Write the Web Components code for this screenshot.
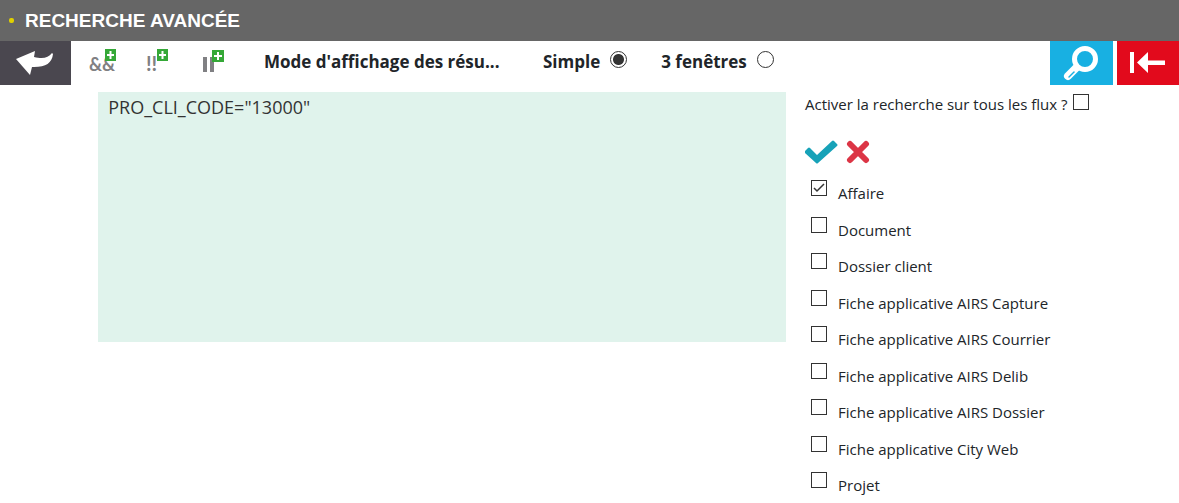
<!DOCTYPE html>
<html lang="fr">
<head>
<meta charset="utf-8">
<title>Recherche avancée</title>
<style>
html, body { margin: 0; background: #fff; }
body { font: 15px/24px "Open Sans", "Noto Sans", sans-serif; color: #212529; }
</style>
</head>
<body>
<search-page></search-page>
<script>
const define = (name, html, setup) => customElements.define(name, class extends HTMLElement {
  constructor() {
    super();
    this.attachShadow({ mode: "open" }).innerHTML = "<style>*{box-sizing:border-box}</style>" + html;
  }
  connectedCallback() { if (setup) setup(this, this.shadowRoot); }
});

define("page-title", `
<style>
:host { display: block; background: #666; color: #fff; }
h1 { display: flex; align-items: center; gap: 11px; height: 41px; margin: 0; padding-left: 9px; font: bold 19px/24px "Liberation Sans", Arial, sans-serif; }
i { width: 5px; height: 5px; border-radius: 2px; background: #e0d000; }
</style>
<h1><i></i><slot></slot></h1>`);

define("icon-button", `
<style>
:host { display: block; }
button { display: flex; align-items: center; justify-content: center; width: 100%; height: 100%; margin: 0; padding: 0; border: 0; background: var(--fill, transparent); cursor: pointer; }
::slotted(svg) { display: block; }
</style>
<button type="button"><slot></slot></button>`, (host, root) => {
  root.querySelector("button").setAttribute("aria-label", host.getAttribute("label"));
});

define("mode-option", `
<style>
:host { display: block; }
label { display: flex; align-items: center; gap: 10px; font: bold 17px/24px "Open Sans", "Noto Sans", sans-serif; white-space: nowrap; }
input { appearance: none; width: 17px; height: 17px; margin: 0 0 5px; border: 1px solid #333; border-radius: 50%; background: #fff; }
input:checked { background: radial-gradient(circle, #333 0 5px, #fff 6px); }
</style>
<label><slot></slot><input type="radio" name="mode"></label>`, (host, root) => {
  root.querySelector("input").checked = host.hasAttribute("checked");
});

define("check-option", `
<style>
:host { display: block; }
label { display: flex; gap: 11px; white-space: nowrap; }
span { padding-top: 1px; }
:host([trailing]) label { flex-direction: row-reverse; justify-content: flex-end; gap: 6px; }
:host([trailing]) span { padding-top: 0; }
:host([trailing]) .box { padding-top: 2px; }
.box { position: relative; }
input { appearance: none; display: block; width: 16px; height: 16px; margin: 0; border: 1px solid #333; background: #fff; }
svg { position: absolute; left: 0; top: 0; display: none; pointer-events: none; }
input:checked + svg { display: block; }
</style>
<label><div class="box"><input type="checkbox"><svg width="16" height="16" fill="none" stroke="#333" stroke-width="1.5"><path d="M3 8l3 3 7-7"/></svg></div><span><slot></slot></span></label>`, (host, root) => {
  root.querySelector("input").checked = host.hasAttribute("checked");
});

define("tool-bar", `
<style>
:host { display: flex; height: 44px; }
.back { width: 71px; --fill: #4a474f; }
.tools { display: flex; padding-left: 17px; gap: 26px; }
.tools icon-button { width: 30px; }
.modes { display: flex; flex: 1; min-width: 0; padding: 9px 0 0 34px; }
.heading { width: 240px; margin-right: 39px; font: bold 17px/24px "Open Sans", "Noto Sans", sans-serif; white-space: nowrap; }
.modes mode-option { margin-right: 34px; }
.search { width: 63px; margin-right: 4px; --fill: #18b0e2; }
.quit { width: 62px; --fill: #e20a1c; }
text { font: bold 20px Lato, sans-serif; fill: #808083; }
</style>
<icon-button class="back" label="Retour"><svg width="71" height="44"><path fill="#fff" d="M16 18L35 10l-1 6c9 2 14 1 18-4l1 1c-1 9-7 13-19 13h-2l-2 8z"/></svg></icon-button>
<div class="tools">
<icon-button label="Ajouter ET"><svg width="30" height="44"><text x="1" y="30" style="font-size:18px">&amp;&amp;</text><path fill="#35a837" d="M17 8h11v12H17z"/><path stroke="#fff" stroke-width="2" d="M22.500 10v8M19 14h7"/></svg></icon-button>
<icon-button label="Ajouter SAUF"><svg width="30" height="44"><text x="2" y="30">!!</text><path fill="#35a837" d="M13 8h11v12H13z"/><path stroke="#fff" stroke-width="2" d="M18.500 10v8M15 14h7"/></svg></icon-button>
<icon-button label="Ajouter OU"><svg width="30" height="44"><path fill="#808083" d="M3 16h4v15H3zM10 16h4v15h-4z"/><path fill="#35a837" d="M12 9h12v12H12z"/><path stroke="#fff" stroke-width="2" d="M18 11v8M14 15h8"/></svg></icon-button>
</div>
<div class="modes">
<div class="heading">Mode d'affichage des résu...</div>
<mode-option checked>Simple</mode-option>
<mode-option>3 fenêtres</mode-option>
</div>
<icon-button class="search" label="Rechercher"><svg width="63" height="44" fill="none" stroke="#fff"><circle cx="35" cy="18" r="10.500" stroke-width="5"/><path stroke-width="8" stroke-linecap="round" d="M26 27l-8 8"/><path stroke="#18b0e2" stroke-width="1.500" stroke-linecap="round" d="M24 31l-5 5"/></svg></icon-button>
<icon-button class="quit" label="Quitter"><svg width="62" height="44" fill="#fff"><path d="M13 11h4v21h-4zM20 21.500L31 11v8.500h17v4.500H31v8z"/></svg></icon-button>`, (host, root) => {
  const radios = [...root.querySelectorAll("mode-option")].map(o => o.shadowRoot.querySelector("input"));
  radios.forEach(r => r.addEventListener("change", () => radios.forEach(o => o.checked = o === r)));
});

define("query-editor", `
<style>
:host { display: block; }
textarea { display: block; width: 100%; height: 250px; margin: 0; padding: 3px 10px; border: 0; resize: none; outline: 0; background: #e0f3ec; color: #333; font: 18px/24px "Open Sans", "Noto Sans", sans-serif; }
</style>
<textarea aria-label="Requête" spellcheck="false">PRO_CLI_CODE="13000"</textarea>`);

define("flow-list", `
<style>
:host { display: block; padding-left: 19px; }
.actions { display: flex; gap: 8px; height: 36px; margin-top: 24px; }
.actions icon-button { height: 24px; }
.yes { width: 33px; }
.no { width: 24px; }
.list { padding-left: 6px; margin-top: 4px; }
.list check-option { height: 36px; }
.list check-option:nth-child(odd) { height: 37px; }
</style>
<check-option trailing>Activer la recherche sur tous les flux ?</check-option>
<div class="actions">
<icon-button class="yes" label="Tout cocher"><svg width="33" height="24" fill="#17a2b8"><path d="M0 11l3-3q1-1 2 0l7 7L27 1q1-1 2 0l3 3q1 1 0 2L13 23q-1 1-2 0L0 13q-1-1 0-2z"/></svg></icon-button>
<icon-button class="no" label="Tout décocher"><svg width="24" height="24" fill="none" stroke="#dc3545" stroke-width="6" stroke-linecap="round"><path d="M4 4l16 16M20 4L4 20"/></svg></icon-button>
</div>
<div class="list">
<check-option checked>Affaire</check-option>
<check-option>Document</check-option>
<check-option>Dossier client</check-option>
<check-option>Fiche applicative AIRS Capture</check-option>
<check-option>Fiche applicative AIRS Courrier</check-option>
<check-option>Fiche applicative AIRS Delib</check-option>
<check-option>Fiche applicative AIRS Dossier</check-option>
<check-option>Fiche applicative City Web</check-option>
<check-option>Projet</check-option>
</div>`);

define("search-page", `
<style>
:host { display: block; }
main { display: grid; grid-template-columns: minmax(0,1fr) minmax(0,7fr) minmax(0,4fr); padding-top: 7px; }
query-editor { grid-column: 2; }
</style>
<page-title>RECHERCHE AVANCÉE</page-title>
<tool-bar></tool-bar>
<main><query-editor></query-editor><flow-list></flow-list></main>`);
</script>
</body>
</html>
